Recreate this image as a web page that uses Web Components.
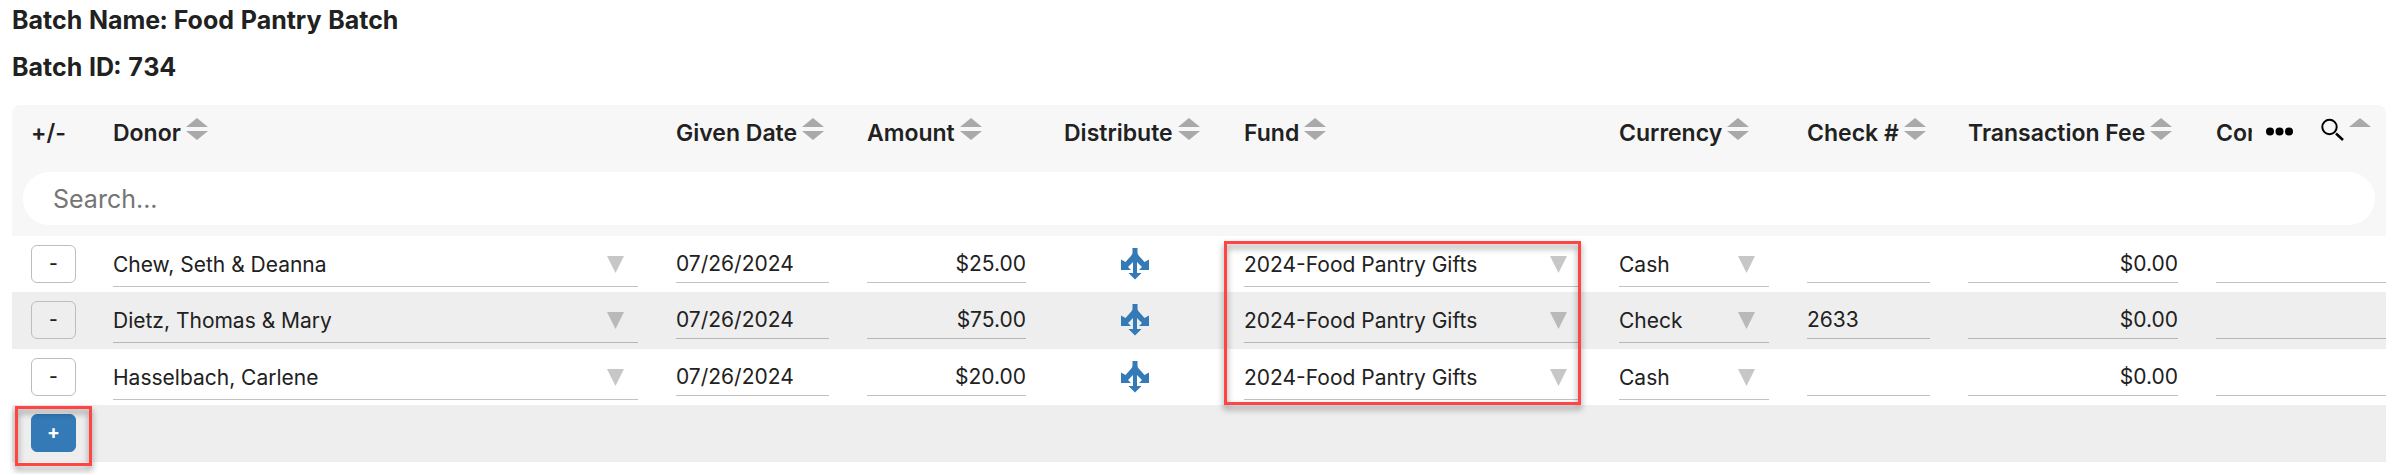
<!DOCTYPE html>
<html lang="en">
<head>
<meta charset="utf-8">
<title>Food Pantry Batch</title>
<style>
  body { margin: 0; background: #fff; color: #212121; font-family: Inter, "Liberation Sans", sans-serif; }
</style>
</head>
<body>
<batch-page>
  <batch-heading slot="heading">Batch Name: Food Pantry Batch</batch-heading>
  <batch-heading slot="heading">Batch ID: 734</batch-heading>
  <batch-grid></batch-grid>
</batch-page>

<script>
const define = (name, html, setup) => {
  const template = document.createElement('template');
  template.innerHTML = html;
  customElements.define(name, class extends HTMLElement {
    connectedCallback() {
      if (this.shadowRoot) return;
      const root = this.attachShadow({ mode: 'open' });
      root.append(template.content.cloneNode(true));
      if (setup) setup(this, root);
    }
  });
};

define('batch-page', `
  <style>
    :host { display: block; padding: 0 12px 12px; }
    header { display: flex; flex-direction: column; gap: 17px; padding: 5px 0 23px; }
  </style>
  <header><slot name="heading"></slot></header>
  <main><slot></slot></main>
`);

define('batch-heading', `
  <style>
    :host { display: block; }
    h2 { margin: 0; font-size: 25px; line-height: 30px; font-weight: 700; font-variant-numeric: tabular-nums; }
  </style>
  <h2><slot></slot></h2>
`);

define('sort-icon', `
  <style>
    :host { display: block; flex: none; }
    :host([up]) .down { display: none; }
    svg { display: block; }
  </style>
  <svg width="22" height="22" viewBox="0 0 22 22" fill="#a9a9a9" aria-hidden="true">
    <path d="M11 0L22 9H0z"/><path class="down" d="M0 13h22L11 22z"/>
  </svg>
`);

define('column-label', `
  <style>
    :host { display: flex; align-items: flex-start; gap: 5px; padding-top: 13px; }
    span { font-size: 23px; line-height: 30px; font-weight: 600; white-space: nowrap; }
    :host([plain]) sort-icon { display: none; }
  </style>
  <span><slot></slot></span><sort-icon></sort-icon>
`);

define('column-tools', `
  <style>
    :host { display: flex; align-items: flex-start; padding-top: 13px; }
    span { width: 36px; overflow: hidden; font-size: 23px; line-height: 30px; font-weight: 600; white-space: nowrap; }
    button { flex: none; display: block; border: 0; padding: 0; background: none; color: #000; }
    .more { margin-left: 14px; }
    .find { margin-left: 28px; }
    sort-icon { margin-left: 5px; }
    svg { display: block; }
  </style>
  <span><slot></slot></span>
  <button class="more" type="button" aria-label="More options">
    <svg width="27" height="26" viewBox="0 0 27 26"><circle cx="4" cy="13.500" r="4"/><circle cx="13.500" cy="13.500" r="4"/><circle cx="23" cy="13.500" r="4"/></svg>
  </button>
  <button class="find" type="button" aria-label="Search">
    <svg width="23" height="24" viewBox="0 0 23 24" fill="none" stroke="#000"><circle cx="8.500" cy="9" r="7.200" stroke-width="2"/><path d="M15 15.500L22 22" stroke-width="2.500"/></svg>
  </button>
  <sort-icon up></sort-icon>
`);

define('search-bar', `
  <style>
    :host { display: block; }
    input { display: block; box-sizing: border-box; width: 100%; height: 53px; border: 0; border-radius: 27px;
      padding: 0 30px; background: #fff; font: 400 25px/30px Inter, "Liberation Sans", sans-serif; color: inherit; outline: 0; }
    input::placeholder { color: #757575; opacity: 1; }
  </style>
  <input type="search" placeholder="Search..." aria-label="Search">
`);

define('line-input', `
  <style>
    :host { display: block; }
    input { display: block; box-sizing: border-box; width: 100%; height: 47px; border: 0; border-bottom: 1px solid rgba(0,0,0,.24);
      border-radius: 0; padding: 9px 0 0; background: none; color: inherit; font: 400 21px/26px Inter, "Liberation Sans", sans-serif; outline: 0; }
    :host([money]) input { text-align: right; }
  </style>
  <input type="text">
`, (host, root) => {
  const input = root.querySelector('input');
  input.value = host.getAttribute('value') || '';
  input.setAttribute('aria-label', host.getAttribute('label'));
});

define('line-select', `
  <style>
    :host { display: grid; align-items: center; border-bottom: 1px solid rgba(0,0,0,.24); }
    select, svg { grid-area: 1 / 1; }
    select { appearance: none; box-sizing: border-box; width: 100%; height: 50px; border: 0; border-radius: 0; margin: 0;
      padding: 8px 40px 0 0; background: none; color: inherit; font: 400 21px/26px Inter, "Liberation Sans", sans-serif; outline: 0; }
    svg { justify-self: end; margin: 7px 14px 0 0; pointer-events: none; }
  </style>
  <select><option></option></select>
  <svg width="17" height="17" viewBox="0 0 17 17" fill="rgba(0,0,0,.22)" aria-hidden="true"><path d="M0 0h17L8.500 17z"/></svg>
`, (host, root) => {
  root.querySelector('option').textContent = host.getAttribute('value');
  root.querySelector('select').setAttribute('aria-label', host.getAttribute('label'));
});

define('row-button', `
  <style>
    :host { display: block; padding-top: 9px; }
    button { display: block; box-sizing: border-box; width: 45px; height: 38px; border: 1px solid #bdbdbd; border-radius: 6px; padding: 0;
      background: none; color: #212121; font: 500 19px/24px Inter, "Liberation Sans", sans-serif; }
    :host([primary]) button { border-color: #337ab7; background: #337ab7; color: #fff; font-weight: 700; }
  </style>
  <button type="button"><slot></slot></button>
`, (host, root) => root.querySelector('button').setAttribute('aria-label', host.getAttribute('label')));

define('split-button', `
  <style>
    :host { display: flex; justify-content: center; padding-top: 12px; }
    button { display: block; border: 0; padding: 0; background: none; }
    svg { display: block; }
  </style>
  <button type="button" aria-label="Distribute">
    <svg width="28" height="32" viewBox="0 0 28 32" fill="#337ab7">
      <path d="M11.500 0h5v4.500c0 2 1.500 3.500 3 5l4 4.500L28 11.500V22H18l3-3-5-5v11h4.500L14 31.500 7.500 25H12V14l-5 5 3 3H0V11.500L4.500 14l4-4.500c1.500-1.500 3-3 3-5z"/>
    </svg>
  </button>
`);

/* Red frame that calls attention to a part of the grid. */
define('callout-frame', `
  <style>
    :host { display: block; position: absolute; box-sizing: border-box; border: 3px solid #f44;
      filter: drop-shadow(0 4px 3px rgba(0,0,0,.45)); pointer-events: none; }
  </style>
`);

define('batch-grid', `
  <style>
    :host { display: block; position: relative; }
    table { width: 100%; table-layout: fixed; border-collapse: separate; border-spacing: 0; }
    th, td { padding: 0 19px; vertical-align: top; text-align: left; font-weight: 400; }
    th:last-child, td:last-child { padding-right: 0; }
    thead th { background: #f7f7f7; height: 67px; }
    thead td.search { background: #f7f7f7; padding: 0 11px 11px; }
    thead th:first-child { border-top-left-radius: 8px; }
    thead th:last-child { border-top-right-radius: 8px; }
    tbody tr { height: 56px; }
    tbody tr:nth-child(even) { height: 57px; background: #eee; }
    .act { width: 82px; } .date { width: 191px; } .amount { width: 197px; } .split { width: 180px; }
    .fund { width: 375px; } .currency { width: 188px; } .check { width: 161px; } .fee { width: 248px; } .comment { width: 189px; }
    .on-fund { top: 136px; right: 805px; width: 357px; height: 164px; }
    .on-add { top: 301px; left: 3px; width: 77px; height: 60px; }
  </style>
  <table>
    <colgroup><col class="act"><col><col class="date"><col class="amount"><col class="split"><col class="fund"><col class="currency"><col class="check"><col class="fee"><col class="comment"></colgroup>
    <thead>
      <tr>
        <th><column-label plain>+/-</column-label></th>
        <th><column-label>Donor</column-label></th>
        <th><column-label>Given Date</column-label></th>
        <th><column-label>Amount</column-label></th>
        <th><column-label>Distribute</column-label></th>
        <th><column-label>Fund</column-label></th>
        <th><column-label>Currency</column-label></th>
        <th><column-label>Check #</column-label></th>
        <th><column-label>Transaction Fee</column-label></th>
        <th><column-tools>Comment</column-tools></th>
      </tr>
      <tr><td class="search" colspan="10"><search-bar></search-bar></td></tr>
    </thead>
    <tbody></tbody>
  </table>
  <callout-frame class="on-fund"></callout-frame>
  <callout-frame class="on-add"></callout-frame>
`, (host, root) => {
  const gifts = [
    ['Chew, Seth &amp; Deanna', '$25.00', 'Cash', ''],
    ['Dietz, Thomas &amp; Mary', '$75.00', 'Check', '2633'],
    ['Hasselbach, Carlene', '$20.00', 'Cash', '']
  ];
  root.querySelector('tbody').innerHTML = gifts.map(([donor, amount, currency, check]) => `
    <tr>
      <td><row-button label="Remove row">-</row-button></td>
      <td><line-select label="Donor" value="${donor}"></line-select></td>
      <td><line-input label="Given Date" value="07/26/2024"></line-input></td>
      <td><line-input money label="Amount" value="${amount}"></line-input></td>
      <td><split-button></split-button></td>
      <td><line-select label="Fund" value="2024-Food Pantry Gifts"></line-select></td>
      <td><line-select label="Currency" value="${currency}"></line-select></td>
      <td><line-input label="Check #" value="${check}"></line-input></td>
      <td><line-input money label="Transaction Fee" value="$0.00"></line-input></td>
      <td><line-input label="Comment" value=""></line-input></td>
    </tr>`).join('') + `
    <tr><td><row-button primary label="Add row">+</row-button></td><td colspan="9"></td></tr>`;
});
</script>
</body>
</html>
